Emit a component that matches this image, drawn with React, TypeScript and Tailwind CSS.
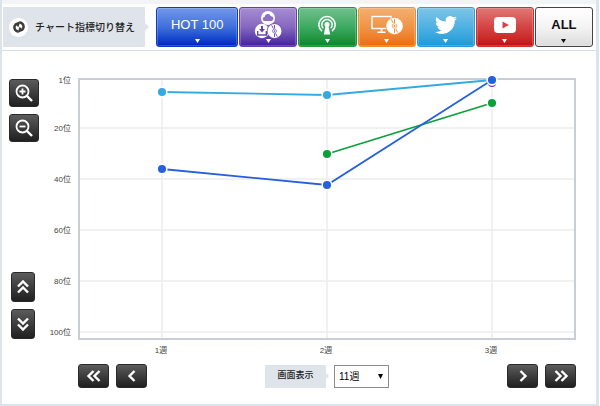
import { useState, type ReactNode } from "react";

const GRID_ROWS = [
  { y: 8, label: "1位" },
  { y: 56, label: "20位" },
  { y: 107, label: "40位" },
  { y: 158, label: "60位" },
  { y: 209, label: "80位" },
  { y: 260, label: "100位" },
];

const GRID_COLS = [
  { x: 118, label: "1週" },
  { x: 283, label: "2週" },
  { x: 448, label: "3週" },
];

const SERIES = [
  { name: "download", color: "#6a3fb5", points: [[448, 11]] },
  { name: "radio", color: "#0aa03a", points: [[283, 82], [448, 31]] },
  { name: "twitter", color: "#35a9e1", points: [[118, 20], [283, 23], [448, 8]] },
  { name: "hot100", color: "#2760dc", points: [[118, 97], [283, 113], [448, 8]] },
];

function Disc({ cx, cy, r, hole }: { cx: number; cy: number; r: number; hole: string }) {
  return (
    <g>
      <circle cx={cx} cy={cy} r={r} fill="#fff" />
      <g stroke={hole} strokeWidth="1">
        <path d={`M${cx - r * 0.4} ${cy - r * 0.8}L${cx - r * 0.15} ${cy - r * 0.35}`} />
        <path d={`M${cx} ${cy - r * 0.85}V${cy - r * 0.35}`} />
        <path d={`M${cx + r * 0.4} ${cy + r * 0.8}L${cx + r * 0.15} ${cy + r * 0.35}`} />
        <path d={`M${cx} ${cy + r * 0.85}V${cy + r * 0.35}`} />
      </g>
      <circle cx={cx} cy={cy} r={r * 0.28} fill="#fff" stroke={hole} strokeWidth="0.7" />
      <circle cx={cx} cy={cy} r={r * 0.12} fill={hole} />
    </g>
  );
}

function DownloadIcon() {
  return (
    <svg className="h-7 w-7" viewBox="0 0 28 28" fill="none">
      <circle cx="14" cy="7" r="7" fill="#fff" />
      <path
        d="M10.800 10a2 2 0 0 1-.2-4 3.200 3.200 0 0 1 6.200-.8 2.400 2.400 0 0 1 .5 4.800z"
        fill="#8b70c3"
      />
      <circle cx="8" cy="20" r="7.200" fill="#fff" />
      <path d="M8 15v4" stroke="#6846b0" strokeWidth="2" />
      <path d="M5 18h6l-3 3.500z" fill="#6846b0" />
      <path d="M3.700 20v4h8.600v-4" stroke="#6846b0" strokeWidth="1.400" />
      <circle cx="20.500" cy="20" r="7.800" fill="#7353b5" />
      <Disc cx={20.5} cy={20} r={7} hole="#7353b5" />
    </svg>
  );
}

function RadioIcon() {
  return (
    <svg className="h-5 w-5" viewBox="0 0 20 20" fill="none" stroke="#fff">
      <path d="M5 16.200a8.200 8.200 0 1 1 10 0" strokeWidth="1.500" />
      <path d="M6.300 13.300a5.200 5.200 0 1 1 7.400 0" strokeWidth="1.500" />
      <circle cx="10" cy="9.500" r="2.500" fill="#fff" stroke="none" />
      <path d="M8.700 10.500h2.600l1.900 9H6.800z" fill="#fff" stroke="none" />
    </svg>
  );
}

function MonitorDiscIcon() {
  return (
    <svg className="h-5 w-8" viewBox="0 0 32 20" fill="none">
      <rect x="1" y="1.500" width="19" height="12" stroke="#fff" strokeWidth="1.400" />
      <path d="M10.500 13.500v3M6.500 17.300h8" stroke="#fff" strokeWidth="1.600" />
      <circle cx="23.500" cy="11" r="9" fill="#f09a4a" />
      <Disc cx={23.5} cy={11} r={8.3} hole="#f0943f" />
    </svg>
  );
}

function TwitterIcon() {
  return (
    <svg className="h-[22px] w-[22px]" viewBox="0 0 24 24" fill="#fff">
      <path d="M23.950 4.570a10 10 0 0 1-2.820.770 4.960 4.960 0 0 0 2.160-2.720c-.950.550-2 .950-3.130 1.180a4.920 4.920 0 0 0-8.380 4.480C7.690 8.100 4.070 6.130 1.640 3.160a4.820 4.820 0 0 0-.670 2.480c0 1.710.870 3.210 2.190 4.100a4.900 4.900 0 0 1-2.230-.620v.060a4.920 4.920 0 0 0 3.950 4.830 5 5 0 0 1-2.210.080 4.940 4.940 0 0 0 4.600 3.420A9.870 9.870 0 0 1 0 19.540a14 14 0 0 0 7.550 2.210c9.050 0 14-7.500 14-13.980 0-.210 0-.420-.020-.630a9.940 9.940 0 0 0 2.460-2.550z" />
    </svg>
  );
}

function YoutubeIcon() {
  return (
    <svg className="h-4 w-[22px]" viewBox="0 0 22 16">
      <rect width="22" height="16" rx="4" fill="#fff" />
      <path d="M8.500 4.500v7l6.500-3.500z" fill="#d64545" />
    </svg>
  );
}

function Chevrons({ turn, double }: { turn: string; double?: boolean }) {
  return (
    <svg
      className={`h-4 w-4 ${turn}`}
      viewBox="0 0 16 16"
      fill="none"
      stroke="#fff"
      strokeWidth="2.400"
    >
      {double ? (
        <path d="M7.500 3l-5 5 5 5M13.500 3l-5 5 5 5" />
      ) : (
        <path d="M10.500 3l-5 5 5 5" />
      )}
    </svg>
  );
}

function Magnifier({ plus }: { plus?: boolean }) {
  return (
    <svg className="h-[18px] w-[18px]" viewBox="0 0 18 18" fill="none" stroke="#fff">
      <circle cx="7.500" cy="7.500" r="6" strokeWidth="1.800" />
      <path d="M12 12l5 5" strokeWidth="2.400" />
      <path d={plus ? "M4.500 7.500h6M7.500 4.500v6" : "M4.500 7.500h6"} strokeWidth="1.800" />
    </svg>
  );
}

function DarkButton({
  label,
  size,
  children,
}: {
  label: string;
  size: string;
  children: ReactNode;
}) {
  return (
    <button
      type="button"
      aria-label={label}
      className={`flex items-center justify-center rounded-[3px] border border-[#292929] bg-linear-to-b from-[#5c5c5c] to-[#202020] ${size}`}
    >
      {children}
    </button>
  );
}

const TABS = [
  {
    id: "hot100",
    label: "HOT 100",
    style: "flex-[83] border-[#1238c8] from-[#7398ea] via-[#416fdb] to-[#0022c2] text-white",
    content: <span className="text-[13px]">HOT 100</span>,
  },
  {
    id: "download",
    label: "ダウンロード",
    style: "flex-[58] border-[#6040b0] from-[#a68dd2] via-[#8668c0] to-[#461c9b] text-white",
    content: <DownloadIcon />,
  },
  {
    id: "radio",
    label: "ラジオ",
    style: "flex-[58] border-[#20953c] from-[#70c08d] via-[#3caa62] to-[#058723] text-white",
    content: <RadioIcon />,
  },
  {
    id: "lookup",
    label: "ルックアップ",
    style: "flex-[58] border-[#ee9030] from-[#f4af70] via-[#f09445] to-[#ec6d04] text-white",
    content: <MonitorDiscIcon />,
  },
  {
    id: "twitter",
    label: "Twitter",
    style: "flex-[58] border-[#2a9bd8] from-[#7cc5e9] via-[#4fb1e2] to-[#179ad8] text-white",
    content: <TwitterIcon />,
  },
  {
    id: "youtube",
    label: "YouTube",
    style: "flex-[58] border-[#cc3030] from-[#df7775] via-[#d34444] to-[#c30b0b] text-white",
    content: <YoutubeIcon />,
  },
  {
    id: "all",
    label: "ALL",
    style: "flex-[58] border-[#444] from-white via-[#f4f4f4] to-[#dcdcdc] text-[#111]",
    content: <span className="text-[13px] font-bold">ALL</span>,
  },
];

function RankChart() {
  return (
    <svg className="block w-full" viewBox="0 0 532 286" role="img" aria-label="チャート推移">
      <g stroke="#ececec" strokeWidth="1.500">
        {GRID_ROWS.slice(1).map((row) => (
          <path key={row.label} d={`M35 ${row.y}H531`} />
        ))}
        {GRID_COLS.map((col) => (
          <path key={col.label} d={`M${col.x} 8V267`} />
        ))}
      </g>
      <rect x="35" y="7" width="496" height="260" fill="none" stroke="#c9cdd4" strokeWidth="2" />
      <g className="text-[8px]" fill="#444">
        {GRID_ROWS.map((row) => (
          <text key={row.label} x="27" y={row.y + 3} textAnchor="end">
            {row.label}
          </text>
        ))}
        {GRID_COLS.map((col) => (
          <text key={col.label} x={col.x - 1} y="281" textAnchor="middle">
            {col.label}
          </text>
        ))}
      </g>
      {SERIES.map((s) => (
        <g key={s.name}>
          <polyline
            points={s.points.map((p) => p.join(",")).join(" ")}
            fill="none"
            stroke={s.color}
            strokeWidth="1.800"
          />
          {s.points.map(([x, y]) => (
            <circle key={x} cx={x} cy={y} r="4.800" fill={s.color} stroke="#fff" strokeWidth="1.500" />
          ))}
        </g>
      ))}
    </svg>
  );
}

export default function App() {
  const [weeks, setWeeks] = useState("11");

  return (
    <div className="bg-white pr-px font-['Liberation_Sans','Noto_Sans_CJK_JP',sans-serif] text-[#222]">
      <div className="border-r-3 border-b-2 border-l-2 border-[#dce3ed]">
        <div className="h-1 bg-[#f2f4f6]" />
        <header className="flex items-center gap-[7px] border-b border-[#d5dfe8] py-[3px] pr-[3px] pl-px">
          <div className="flex shrink-0 items-center">
            <div className="flex h-10 w-[142px] items-center gap-[7px] bg-[#dfe4eb] pl-1.5">
              <span className="flex h-[19px] w-[19px] shrink-0 items-center justify-center rounded-full bg-white">
                <svg
                  className="h-3.5 w-3.5"
                  viewBox="0 0 14 14"
                  fill="none"
                  stroke="#3c3c3c"
                  strokeWidth="2.400"
                >
                  <path d="M6 11.500C2.200 10.500 1.200 6.500 4 4.200" />
                  <path d="M8 2.500c3.800 1 4.800 5 2 7.300" />
                  <path d="M2.600 3.600L8.500 1 6.400 7.200z" fill="#3c3c3c" stroke="none" />
                  <path d="M11.400 10.400L5.500 13 7.600 6.800z" fill="#3c3c3c" stroke="none" />
                </svg>
              </span>
              <h1 className="text-[10px] font-medium whitespace-nowrap">チャート指標切り替え</h1>
            </div>
            <svg className="h-2 w-1" viewBox="0 0 4 8" fill="#dfe4eb">
              <path d="M0 0l4 4-4 4z" />
            </svg>
          </div>
          <nav className="flex min-w-0 flex-1 gap-px">
            {TABS.map((tab) => (
              <button
                key={tab.id}
                type="button"
                aria-label={tab.label}
                className={`flex h-10 min-w-0 flex-col items-center rounded-[3px] border bg-linear-to-b shadow-[inset_0_0_0_1px_rgba(255,255,255,0.2)] ${tab.style}`}
              >
                <span className="flex h-[31px] shrink-0 items-center justify-center pt-0.5">
                  {tab.content}
                </span>
                <svg className="h-1 w-[5px] shrink-0" viewBox="0 0 5 4" fill="currentColor">
                  <path d="M0 0h5L2.500 4z" />
                </svg>
              </button>
            ))}
          </nav>
        </header>

        <main className="pt-[21px] pr-5 pb-4 pl-[7px]">
          <div className="flex gap-[5px]">
            <div className="flex w-[30px] shrink-0 flex-col justify-between pt-[7px] pb-[19px]">
              <div className="flex flex-col gap-[7px]">
                <DarkButton label="拡大" size="h-7 w-[30px]">
                  <Magnifier plus />
                </DarkButton>
                <DarkButton label="縮小" size="h-7 w-[30px]">
                  <Magnifier />
                </DarkButton>
              </div>
              <div className="flex flex-col items-center gap-[7px] pr-1 pl-0.5">
                <DarkButton label="上へ" size="h-[30px] w-6">
                  <Chevrons turn="rotate-90" double />
                </DarkButton>
                <DarkButton label="下へ" size="h-[30px] w-6">
                  <Chevrons turn="-rotate-90" double />
                </DarkButton>
              </div>
            </div>
            <div className="min-w-0 flex-1">
              <RankChart />
            </div>
          </div>

          <div className="mt-1.5 flex items-center justify-between pl-[69px]">
            <div className="flex gap-[7px]">
              <DarkButton label="最初へ" size="h-6 w-[31px]">
                <Chevrons turn="rotate-0" double />
              </DarkButton>
              <DarkButton label="前へ" size="h-6 w-[31px]">
                <Chevrons turn="rotate-0" />
              </DarkButton>
            </div>
            <div className="flex items-center">
              <label
                htmlFor="weeks"
                className="flex h-[23px] w-[61px] items-center justify-center bg-[#dfe4eb] text-[9px] font-medium"
              >
                画面表示
              </label>
              <svg className="mr-[5px] h-1.5 w-[3px]" viewBox="0 0 3 6" fill="#dfe4eb">
                <path d="M0 0l3 3-3 3z" />
              </svg>
              <span className="grid items-center">
                <select
                  id="weeks"
                  value={weeks}
                  onChange={(e) => setWeeks(e.target.value)}
                  className="col-start-1 row-start-1 h-[23px] w-[55px] appearance-none border border-[#8c8c8c] bg-white pl-1 text-[10px] text-black"
                >
                  <option value="3">3週</option>
                  <option value="11">11週</option>
                </select>
                <svg
                  className="pointer-events-none col-start-1 row-start-1 mr-1.5 h-[5px] w-[5px] justify-self-end"
                  viewBox="0 0 5 5"
                >
                  <path d="M0 0h5L2.500 5z" />
                </svg>
              </span>
            </div>
            <div className="flex gap-[7px]">
              <DarkButton label="次へ" size="h-6 w-[31px]">
                <Chevrons turn="rotate-180" />
              </DarkButton>
              <DarkButton label="最後へ" size="h-6 w-[31px]">
                <Chevrons turn="rotate-180" double />
              </DarkButton>
            </div>
          </div>
        </main>
      </div>
    </div>
  );
}
